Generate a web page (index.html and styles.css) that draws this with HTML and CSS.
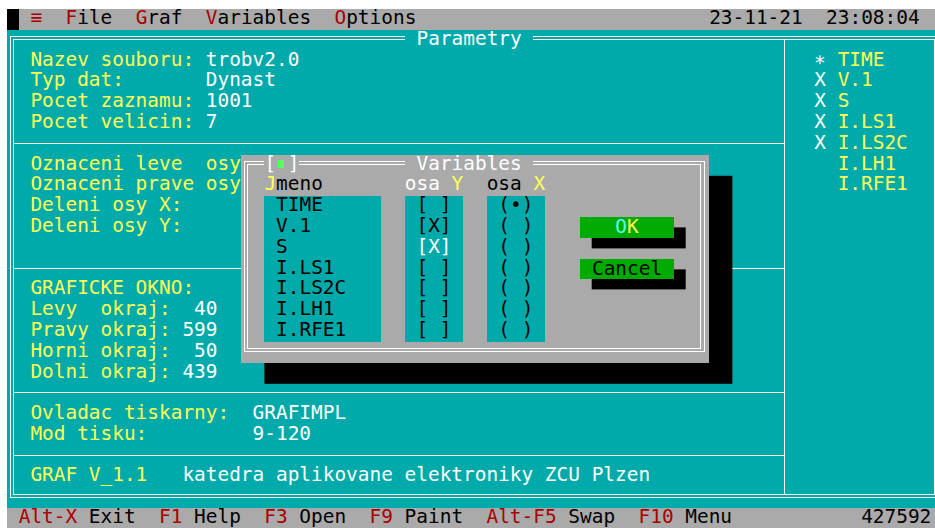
FILE: index.html
```html
<!DOCTYPE html>
<html lang="cs">
<head>
<meta charset="utf-8">
<title>GRAF V_1.1 – Parametry</title>
<link rel="stylesheet" href="styles.css">
</head>
<body>
<div class="screen">

  <header class="menubar">
    <span class="cursor-cell"></span>
    <nav class="menu ln"> <span class="hot">≡</span>  <span class="hot">F</span>ile  <span class="hot">G</span>raf  <span class="hot">V</span>ariables  <span class="hot">O</span>ptions</nav>
    <div class="clock ln">23-11-21  23:08:04</div>
  </header>

  <main class="window">
    <div class="frame">
      <div class="frame-in panes">
        <section class="left">
          <div class="sec">
            <div class="ln"><span class="lbl">Nazev souboru: </span><span class="val">trobv2.0</span></div>
            <div class="ln"><span class="lbl">Typ dat:       </span><span class="val">Dynast</span></div>
            <div class="ln"><span class="lbl">Pocet zaznamu: </span><span class="val">1001</span></div>
            <div class="ln"><span class="lbl">Pocet velicin: </span><span class="val">7</span></div>
          </div>
          <div class="sec">
            <div class="ln lbl">Oznaceni leve  osy</div>
            <div class="ln lbl">Oznaceni prave osy</div>
            <div class="ln lbl">Deleni osy X:</div>
            <div class="ln lbl">Deleni osy Y:</div>
            <div class="ln"></div>
          </div>
          <div class="sec">
            <div class="ln lbl">GRAFICKE OKNO:</div>
            <div class="ln"><span class="lbl">Levy  okraj:</span><span class="val">  40</span></div>
            <div class="ln"><span class="lbl">Pravy okraj:</span><span class="val"> 599</span></div>
            <div class="ln"><span class="lbl">Horni okraj:</span><span class="val">  50</span></div>
            <div class="ln"><span class="lbl">Dolni okraj:</span><span class="val"> 439</span></div>
          </div>
          <div class="sec">
            <div class="ln"><span class="lbl">Ovladac tiskarny:  </span><span class="val">GRAFIMPL</span></div>
            <div class="ln"><span class="lbl">Mod tisku:         </span><span class="val">9-120</span></div>
          </div>
          <div class="sec">
            <div class="ln"><span class="lbl">GRAF V_1.1   </span><span class="val">katedra aplikovane elektroniky ZCU Plzen</span></div>
          </div>
        </section>

        <aside class="right">
          <div class="var-row ln"><span class="mark">∗</span><span class="lbl">TIME</span></div>
          <div class="var-row ln"><span class="mark">X</span><span class="lbl">V.1</span></div>
          <div class="var-row ln"><span class="mark">X</span><span class="lbl">S</span></div>
          <div class="var-row ln"><span class="mark">X</span><span class="lbl">I.LS1</span></div>
          <div class="var-row ln"><span class="mark">X</span><span class="lbl">I.LS2C</span></div>
          <div class="var-row ln"><span class="mark"></span><span class="lbl">I.LH1</span></div>
          <div class="var-row ln"><span class="mark"></span><span class="lbl">I.RFE1</span></div>
        </aside>
      </div>
    </div>
    <div class="title title--window ln"> Parametry </div>
  </main>

  <footer class="statusbar">
    <div class="ln"> <span class="hot">Alt-X</span> Exit  <span class="hot">F1</span> Help  <span class="hot">F3</span> Open  <span class="hot">F9</span> Paint  <span class="hot">Alt-F5</span> Swap  <span class="hot">F10</span> Menu</div>
    <div class="ln">427592</div>
  </footer>

  <div class="dialog" role="dialog" aria-label="Variables">
    <div class="frame">
      <div class="frame-in dialog-body">
        <div class="label label--name ln"><span class="key">J</span>meno</div>
        <div class="label label--y ln focus">osa <span class="key">Y</span></div>
        <div class="label label--x ln">osa <span class="key">X</span></div>

        <div class="list list--names">
          <div class="ln"> TIME</div>
          <div class="ln"> V.1</div>
          <div class="ln"> S</div>
          <div class="ln"> I.LS1</div>
          <div class="ln"> I.LS2C</div>
          <div class="ln"> I.LH1</div>
          <div class="ln"> I.RFE1</div>
        </div>

        <div class="list list--y">
          <div class="ln"> [ ] </div>
          <div class="ln"> [X] </div>
          <div class="ln focus"> [X] </div>
          <div class="ln"> [ ] </div>
          <div class="ln"> [ ] </div>
          <div class="ln"> [ ] </div>
          <div class="ln"> [ ] </div>
        </div>

        <div class="list list--x">
          <div class="ln"> (•) </div>
          <div class="ln"> ( ) </div>
          <div class="ln"> ( ) </div>
          <div class="ln"> ( ) </div>
          <div class="ln"> ( ) </div>
          <div class="ln"> ( ) </div>
          <div class="ln"> ( ) </div>
        </div>

        <button class="btn btn--ok ln" type="button"><span class="ok-o">O</span><span class="ok-k">K</span></button>
        <button class="btn btn--cancel ln" type="button">Cancel</button>
      </div>
    </div>
    <div class="close ln"><span class="cell">[</span><span class="cell close-box"><span class="close-dot"></span></span><span class="cell">]</span></div>
    <div class="title title--dialog ln"> Variables </div>
  </div>

</div>
</body>
</html>
```

FILE: styles.css
```css
/* 80x25 text-mode screen: every size is a multiple of one character cell */
:root {
  --cw: 11.7px;          /* cell width */
  --rh: 20.8px;          /* cell height (one text row) */
  --teal: #00aaaa;
  --gray: #aaaaaa;
  --yellow: #ffff55;
  --red: #aa0000;
  --green: #00aa00;
  --lgreen: #55ff55;
  --lcyan: #55ffff;
}

*, *::before, *::after { box-sizing: border-box; }

html, body {
  margin: 0;
  background: #fff;
  overflow: hidden;
}

body {
  font-family: "DejaVu Sans Mono", "Liberation Mono", monospace;
  font-size: 19.434px;   /* advance of one glyph = one cell */
}

.screen {
  position: relative;
  width: calc(80 * var(--cw));
  height: calc(25 * var(--rh));
  margin: 9px 0 0 7px;
  display: flex;
  flex-direction: column;
}

/* one row of text */
.ln {
  display: block;
  height: var(--rh);
  line-height: 18.2px;
  white-space: pre;
}

.hot { color: var(--red); }
.lbl { color: var(--yellow); }
.val { color: #fff; }

/* ---------- menu bar ---------- */
.menubar {
  flex: none;
  display: flex;
  height: var(--rh);
  background: var(--gray);
  color: #000;
  padding-right: calc(2 * var(--cw));
}
.cursor-cell {
  width: var(--cw);
  background: #000;
}
.menu { flex: 1; }

/* ---------- status line ---------- */
.statusbar {
  flex: none;
  display: flex;
  justify-content: space-between;
  height: var(--rh);
  background: var(--gray);
  color: #000;
  padding-right: var(--cw);
}

/* ---------- double-line frame shared by window and dialog ---------- */
.window,
.dialog {
  padding: 6.5px 4.2px 10.7px 2.6px;
}
.frame {
  height: 100%;
  border: 1px solid #fff;
  padding: 1.6px 2.9px;
}
.frame-in {
  height: 100%;
  border: 1px solid #fff;
}

.title {
  position: absolute;
  top: 0;
  color: #fff;
}

/* ---------- main window ---------- */
.window {
  position: relative;
  flex: none;
  height: calc(23 * var(--rh));
  background: var(--teal);
}
.title--window {
  left: calc(34 * var(--cw));
  background: var(--teal);
}

.panes { display: flex; }

.left {
  width: calc(66 * var(--cw) - 1.3px);
  border-right: 1px solid #fff;
  display: flex;
  flex-direction: column;
}
.sec {
  padding: 10.7px 0 9.1px 15.9px;
  border-bottom: 1px solid #fff;
}
.sec:last-child {
  flex: 1;
  border-bottom: 0;
  padding-bottom: 0;
}
.sec > .ln:not(.lbl) { color: #fff; }

.right {
  flex: 1;
  padding: 10.7px 0 0 28.9px;
}
.var-row { display: flex; }
.mark {
  width: calc(2 * var(--cw));
  color: #fff;
}

/* ---------- Variables dialog ---------- */
.dialog {
  position: absolute;
  left: calc(20 * var(--cw));
  top: calc(7 * var(--rh));
  width: calc(40 * var(--cw));
  height: calc(10 * var(--rh));
  background: var(--gray);
  box-shadow: calc(2 * var(--cw)) var(--rh) 0 #000;
}
.title--dialog {
  left: calc(14 * var(--cw));
  background: var(--gray);
}

.close {
  position: absolute;
  top: 0;
  left: calc(2 * var(--cw));
  display: flex;
  background: var(--gray);
  color: #fff;
}
.cell { width: var(--cw); }
.close-dot {
  display: block;
  width: 6px;
  height: 8px;
  margin: 5.5px 0 0 1.5px;
  background: var(--lgreen);
}

.dialog-body {
  display: grid;
  grid-template-columns:
    calc(10 * var(--cw)) calc(2 * var(--cw))
    calc(5 * var(--cw)) calc(2 * var(--cw))
    calc(5 * var(--cw)) calc(3 * var(--cw))
    calc(8 * var(--cw));
  grid-template-rows: repeat(8, var(--rh));
  align-content: start;
  padding: 10.7px 0 0 15.9px;
  color: #000;
}

.label { grid-row: 1; color: #000; }
.label--name { grid-column: 1; }
.label--y { grid-column: 3; }
.label--x { grid-column: 5; }
.key { color: var(--yellow); }
.focus { color: #fff; }

.list {
  grid-row: 2 / span 7;
  background: var(--teal);
  color: #000;
}
.list--names { grid-column: 1; }
.list--y { grid-column: 3; }
.list--x { grid-column: 5; }

.btn {
  grid-column: 7;
  margin: 0;
  padding: 0;
  border: 0;
  font: inherit;
  line-height: 18.2px;
  text-align: center;
  color: #000;
  background: var(--green);
  box-shadow: var(--cw) calc(var(--rh) / 2) 0 #000;
}
.btn--ok { grid-row: 3; }
.btn--cancel { grid-row: 5; }
.ok-o { color: var(--lcyan); }
.ok-k { color: var(--yellow); }
```
